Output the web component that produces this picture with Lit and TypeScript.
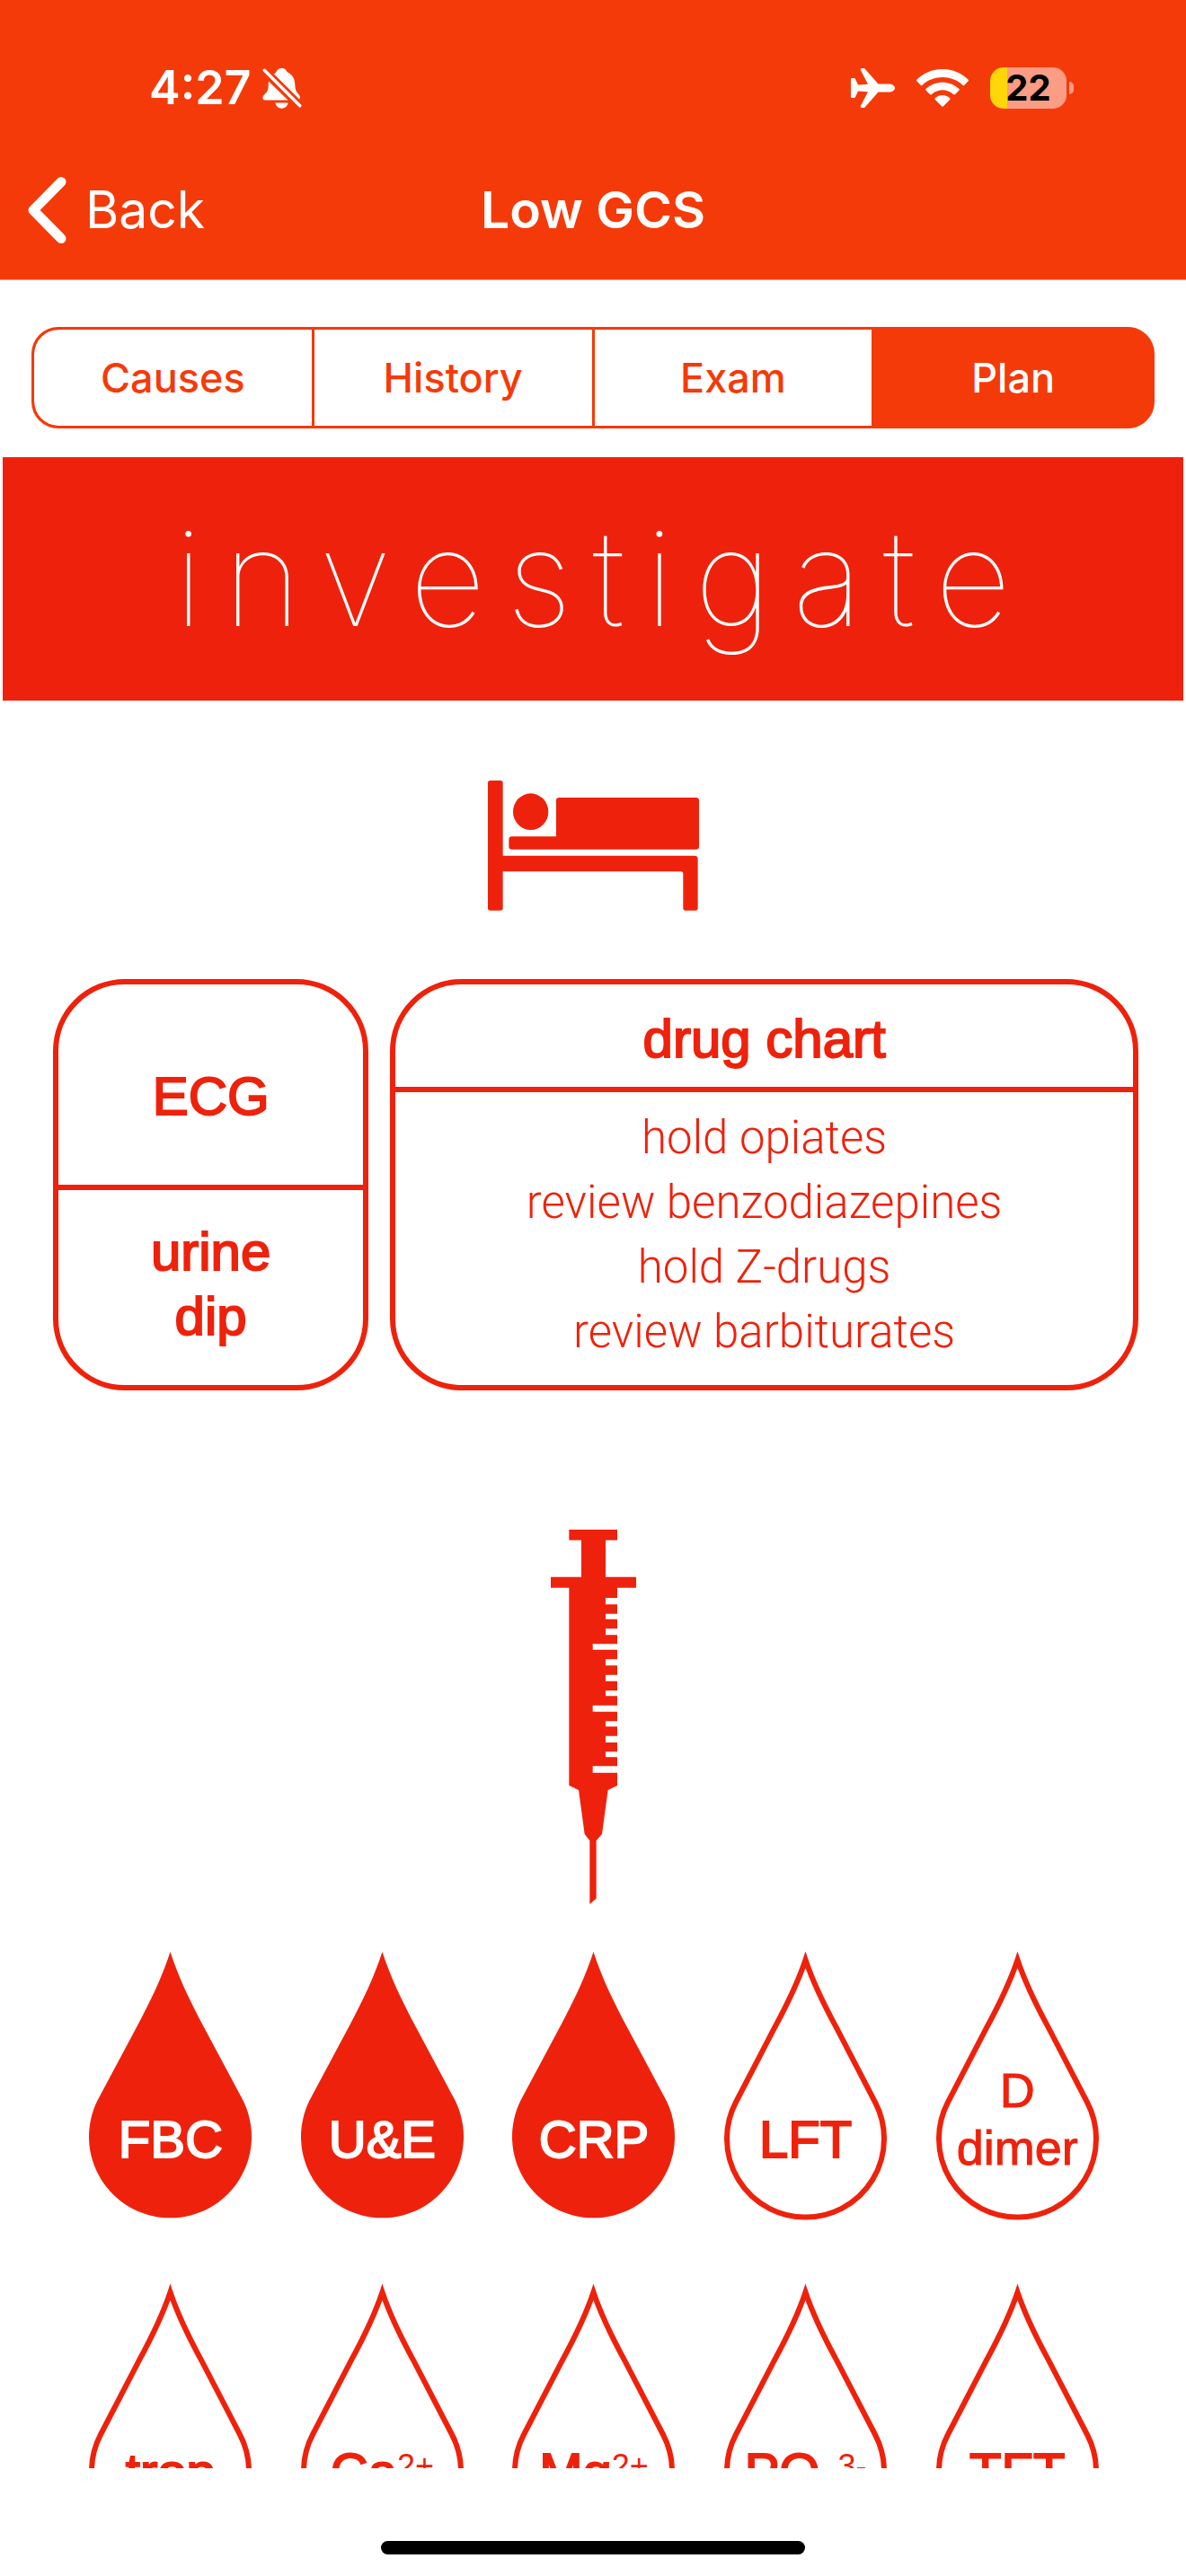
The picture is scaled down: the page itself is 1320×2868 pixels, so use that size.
import { LitElement, html, css, svg, TemplateResult } from "lit";
import { customElement, property, state } from "lit/decorators.js";
import { classMap } from "lit/directives/class-map.js";

@customElement("status-bar")
class StatusBar extends LitElement {
  static styles = css`
    :host { display: block; }
    .bar {
      display: flex;
      align-items: center;
      justify-content: space-between;
      height: 116px;
      padding: 40px 125px 0 166px;
      color: #fff;
    }
    .group { display: flex; align-items: center; }
    .time { font-size: 52px; font-weight: 600; line-height: 60px; margin-right: 12px; }
    .icons { gap: 24px; }
    svg { display: block; fill: currentColor; }
    .battery { display: flex; align-items: center; gap: 3px; }
    .cell {
      display: grid;
      place-items: center;
      width: 85px;
      height: 46px;
      border-radius: 15px;
      background: linear-gradient(90deg, #ffd60a 0 22%, #fb9c84 22%);
      color: #000;
      font-size: 40px;
      font-weight: 700;
      line-height: 46px;
    }
    .nub { width: 5px; height: 14px; border-radius: 0 5px 5px 0; background: #fb9c84; }
  `;

  render() {
    return html`
      <div class="bar">
        <div class="group">
          <span class="time">4:27</span>
          <svg width="44" height="46" viewBox="0 0 44 46" role="img" aria-label="Silent mode">
            <path d="M13 7.500C15 6 15.300 4.800 16.500 3.200C18.500 -.2 24.500 -.2 26.500 3.200C27.500 5 28.200 5.600 30 6.600C34.500 9.500 36 14 36.300 19C36.500 24.500 37.500 27 40.500 30.200C42 32 42.500 33.500 41.200 35.400Z"/>
            <path d="M7 15.500L28.500 36.500H3C.5 36.500 -.3 33.500 1.200 31.500C4 28 6.500 27 6.700 20.500C6.700 18.500 6.600 17 7 15.500Z"/>
            <path d="M14.500 39.500H28.500C28 43 25 45.700 21.500 45.700C18 45.700 15 43 14.500 39.500Z"/>
            <path d="M2.300 3.300L41.800 42.800" fill="none" stroke="#fff" stroke-width="3.400" stroke-linecap="round"/>
          </svg>
        </div>
        <div class="group icons">
          <svg width="49" height="44" viewBox="0 0 49 44" role="img" aria-label="Airplane mode">
            <path d="M0 12C0 11.400 .5 11 1.200 11H3.500C4.200 11 4.600 11.300 5 11.900L8 18.600L19 17.800L11 2.200C10.300 .9 10.800 0 12 0H14C15 0 15.600 .4 16.200 1.200L30.500 17.500H42C46 17.500 49 19.600 49 22C49 24.500 46 26.500 42 26.500H30.500L16.200 42.800C15.600 43.600 15 44 14 44H12C10.800 44 10.300 43.100 11 41.800L19 26.300L8 25.400L5 32.100C4.600 32.700 4.200 33 3.500 33H1.200C.5 33 0 32.600 0 32Z"/>
          </svg>
          <svg width="58" height="42" viewBox="0 0 58 42" role="img" aria-label="Wi-Fi">
            <path d="M.6 13.600C-.1 12.900 -.1 12.200 .5 11.600C16 -3.900 42 -3.900 57.500 11.600C58.100 12.200 58.100 12.900 57.400 13.600L53.300 17.700C52.700 18.300 52 18.300 51.400 17.700C39 6.200 19 6.200 6.600 17.700C6 18.300 5.300 18.300 4.700 17.700Z"/>
            <path d="M10.700 23.700C10.100 23.100 10.100 22.400 10.700 21.800C21 12.300 37 12.300 47.300 21.800C47.900 22.400 47.900 23.100 47.300 23.700L43 28C42.400 28.600 41.700 28.600 41 28C34 21.800 24 21.800 17 28C16.300 28.600 15.600 28.600 15 28Z"/>
            <path d="M20.900 33.900C20.300 33.300 20.300 32.600 21 32C25.700 28 32.300 28 37 32C37.700 32.600 37.700 33.300 37.100 33.900L29.900 41.200C29.300 41.800 28.700 41.800 28.100 41.200Z"/>
          </svg>
          <div class="battery">
            <div class="cell">22</div>
            <div class="nub"></div>
          </div>
        </div>
      </div>
    `;
  }
}

@customElement("nav-bar")
class NavBar extends LitElement {
  static styles = css`
    :host { display: block; }
    .nav {
      display: grid;
      grid-template-columns: 1fr auto 1fr;
      align-items: center;
      height: 155px;
      padding: 0 29px;
      color: #fff;
      font-size: 57px;
      line-height: 72px;
    }
    .back {
      display: flex;
      align-items: center;
      gap: 21px;
      justify-self: start;
      color: inherit;
      text-decoration: none;
    }
    .title { margin: 0; font-size: 57px; font-weight: 600; }
    svg { display: block; }
  `;

  render() {
    return html`
      <nav class="nav">
        <a class="back" href="#back">
          <svg width="45" height="76" viewBox="0 0 45 76" aria-hidden="true">
            <path d="M39 6.500L8 38L39 69.500" fill="none" stroke="#fff" stroke-width="11" stroke-linecap="round" stroke-linejoin="round"/>
          </svg>
          <span>Back</span>
        </a>
        <h1 class="title">Low GCS</h1>
      </nav>
    `;
  }
}

@customElement("segment-tabs")
class SegmentTabs extends LitElement {
  @property({ type: Array }) labels: string[] = [];
  @state() private active = 3;

  static styles = css`
    :host { display: block; }
    .tabs {
      display: grid;
      grid-auto-flow: column;
      grid-auto-columns: 1fr;
      gap: 3px;
      border: 3px solid #f53a0a;
      border-radius: 30px;
      background: #f53a0a;
      overflow: hidden;
    }
    .tab {
      height: 107px;
      border: 0;
      padding: 0;
      background: #fff;
      color: #f53a0a;
      font: 500 45px/60px Inter, "Liberation Sans", sans-serif;
      cursor: pointer;
    }
    .tab:first-child { border-radius: 27px 0 0 27px; }
    .tab:last-child { border-radius: 0 27px 27px 0; }
    .active { background: #f53a0a; color: #fff; }
  `;

  render() {
    return html`
      <div class="tabs" role="tablist">
        ${this.labels.map(
          (label, i) => html`<button
            type="button"
            role="tab"
            class=${classMap({ tab: true, active: i === this.active })}
            aria-selected=${i === this.active ? "true" : "false"}
            @click=${() => (this.active = i)}
          >${label}</button>`
        )}
      </div>
    `;
  }
}

@customElement("blood-drop")
class BloodDrop extends LitElement {
  @property({ type: Boolean }) filled = false;
  @property({ type: Boolean }) tall = false;

  static styles = css`
    :host { display: block; }
    .drop { display: grid; justify-items: center; color: #ee220c; }
    svg, .label { grid-area: 1 / 1; }
    svg { display: block; }
    .outline { fill: none; stroke: #ee220c; stroke-width: 6; stroke-miterlimit: 10; }
    .solid { fill: #ee220c; }
    .label {
      display: grid;
      place-items: center;
      align-content: center;
      padding-top: 118px;
      font-size: 58px;
      line-height: 64px;
      text-align: center;
      white-space: nowrap;
      -webkit-text-stroke: 2px currentColor;
    }
    .filled { color: #fff; }
    .tall { font-size: 54px; padding-bottom: 46px; -webkit-text-stroke: 1px currentColor; }
  `;

  render() {
    const shape = this.filled
      ? svg`<path class="solid" d="M90.500 0C99.500 28 112.500 55 128 84L171.500 165.500A90.500 90.500 0 1 1 9.500 165.500L53 84C68.500 55 81.500 28 90.500 0Z"/>`
      : svg`<path class="outline" d="M90.500 9C99.500 36 110.500 58 125.400 85.400L168 167.500A87.500 87.500 0 1 1 13 167.500L55.600 85.400C70.500 58 81.500 36 90.500 9Z"/>`;
    return html`
      <div class="drop">
        <svg width="181" height="299" viewBox="0 0 181 299" aria-hidden="true">${shape}</svg>
        <div class=${classMap({ label: true, filled: this.filled, tall: this.tall })}>
          <span><slot></slot></span>
        </div>
      </div>
    `;
  }
}

interface Test {
  label: TemplateResult;
  filled?: boolean;
  tall?: boolean;
}

@customElement("app-root")
class AppRoot extends LitElement {
  private drugs = ["hold opiates", "review benzodiazepines", "hold Z-drugs", "review barbiturates"];

  private tests: Test[] = [
    { label: html`FBC`, filled: true },
    { label: html`U&amp;E`, filled: true },
    { label: html`CRP`, filled: true },
    { label: html`LFT` },
    { label: html`D<br />dimer`, tall: true },
    { label: html`trop` },
    { label: html`Ca<sup class="sup">2+</sup>` },
    { label: html`Mg<sup class="sup">2+</sup>` },
    { label: html`PO<sub class="sub">4</sub><sup class="sup">3-</sup>` },
    { label: html`TFT` },
  ];

  static styles = css`
    :host {
      display: flex;
      flex-direction: column;
      height: 100vh;
      overflow: hidden;
      background: #fff;
      font-family: Inter, "Liberation Sans", sans-serif;
    }
    .header { background: #f53a0a; border-bottom: 1px solid #b8b4b2; }
    .main {
      flex: 1 1 0;
      min-height: 0;
      overflow: hidden;
      color: #ee220c;
      font-family: "Liberation Sans", Arial, sans-serif;
    }
    .segments { margin: 52px 35px 32px; }
    .banner {
      display: flex;
      justify-content: center;
      margin: 0 3px;
      padding: 45px 0 46px 22px;
      background: #ee220c;
      color: #fff;
      font: 100 148px/180px Inter, "Liberation Sans", sans-serif;
      letter-spacing: 23px;
    }
    .icon { display: block; margin: 0 auto; fill: #ee220c; }
    .bed { margin-top: 89px; }
    .syringe { margin-top: 155px; }
    .cards {
      display: grid;
      grid-template-columns: 351fr 832fr;
      gap: 24px;
      margin: 76px 53px 0 59px;
    }
    .card {
      display: flex;
      flex-direction: column;
      height: 446px;
      border: 6px solid #ee220c;
      border-radius: 80px;
      text-align: center;
    }
    .split { display: grid; grid-template-rows: 1fr 1fr; }
    .cell {
      display: grid;
      align-content: center;
      box-sizing: border-box;
      font-size: 60px;
      font-weight: 400;
      line-height: 72px;
      margin: 0;
      -webkit-text-stroke: 2px currentColor;
    }
    .raise, .list { border-top: 6px solid #ee220c; }
    .lower { padding-top: 26px; }
    .raise { padding-bottom: 8px; }
    .head { flex: 0 0 114px; padding-top: 8px; }
    .list {
      display: grid;
      align-content: center;
      flex: 1 1 0;
      margin: 0;
      padding: 0 0 8px;
      list-style: none;
      font: 300 51px/72px Roboto, "Liberation Sans", sans-serif;
    }
    .drops {
      display: grid;
      grid-template-columns: repeat(5, 1fr);
      row-gap: 71px;
      margin: 53px 70px 0 72px;
      padding: 0;
      list-style: none;
    }
    .sup, .sub {
      font-size: 36px;
      line-height: 0;
      -webkit-text-stroke: 0;
    }
    .sup { vertical-align: 14px; }
    .sub { vertical-align: -10px; }
    .footer { display: flex; justify-content: center; padding: 81px 0 24px; }
    .home { width: 472px; height: 15px; border-radius: 8px; background: #000; }
  `;

  render() {
    return html`
      <header class="header">
        <status-bar></status-bar>
        <nav-bar></nav-bar>
      </header>
      <main class="main">
        <segment-tabs class="segments" .labels=${["Causes", "History", "Exam", "Plan"]}></segment-tabs>
        <div class="banner">investigate</div>

        <svg class="icon bed" width="235" height="145" viewBox="0 0 705 435" role="img" aria-label="Bedside">
          <path d="M8 0H42Q50 0 50 8V251H690Q701 251 701 262V426Q701 434 693 434H660Q652 434 652 426V312Q652 304 644 304H50V426Q50 434 42 434H8Q0 434 0 426V8Q0 0 8 0Z"/>
          <path d="M228 187V67Q228 57 238 57H695Q705 57 705 67V221Q705 230 695 230H80Q70 230 70 221V197Q70 187 80 187Z"/>
          <ellipse cx="143" cy="104" rx="59" ry="61"/>
        </svg>

        <section class="cards">
          <div class="card split">
            <h2 class="cell lower">ECG</h2>
            <h2 class="cell raise">urine<br />dip</h2>
          </div>
          <div class="card">
            <h2 class="cell head">drug chart</h2>
            <ul class="list">
              ${this.drugs.map((drug) => html`<li>${drug}</li>`)}
            </ul>
          </div>
        </section>

        <svg class="icon syringe" width="95" height="417" viewBox="156 69 285 1251" role="img" aria-label="Bloods">
          <path d="M217 69H378V104H339V227H441V263H378V297H339V319H378V350H339V368H378V400H339V421H378V451H296V470H378V502H339V523H378V554H339V575H378V607H339V625H378V656H296V677H378V709H339V727H378V758H339V780H378V811H339V829H378V859H296V881H378V924L347 939L327 1086L308 1108V1301L286 1320V1108L269 1086L249 939L217 923V263H156V227H258V104H217Z"/>
        </svg>

        <ul class="drops">
          ${this.tests.map(
            (t) => html`<li><blood-drop ?filled=${t.filled} ?tall=${t.tall}>${t.label}</blood-drop></li>`
          )}
        </ul>
      </main>
      <footer class="footer"><div class="home"></div></footer>
    `;
  }
}
